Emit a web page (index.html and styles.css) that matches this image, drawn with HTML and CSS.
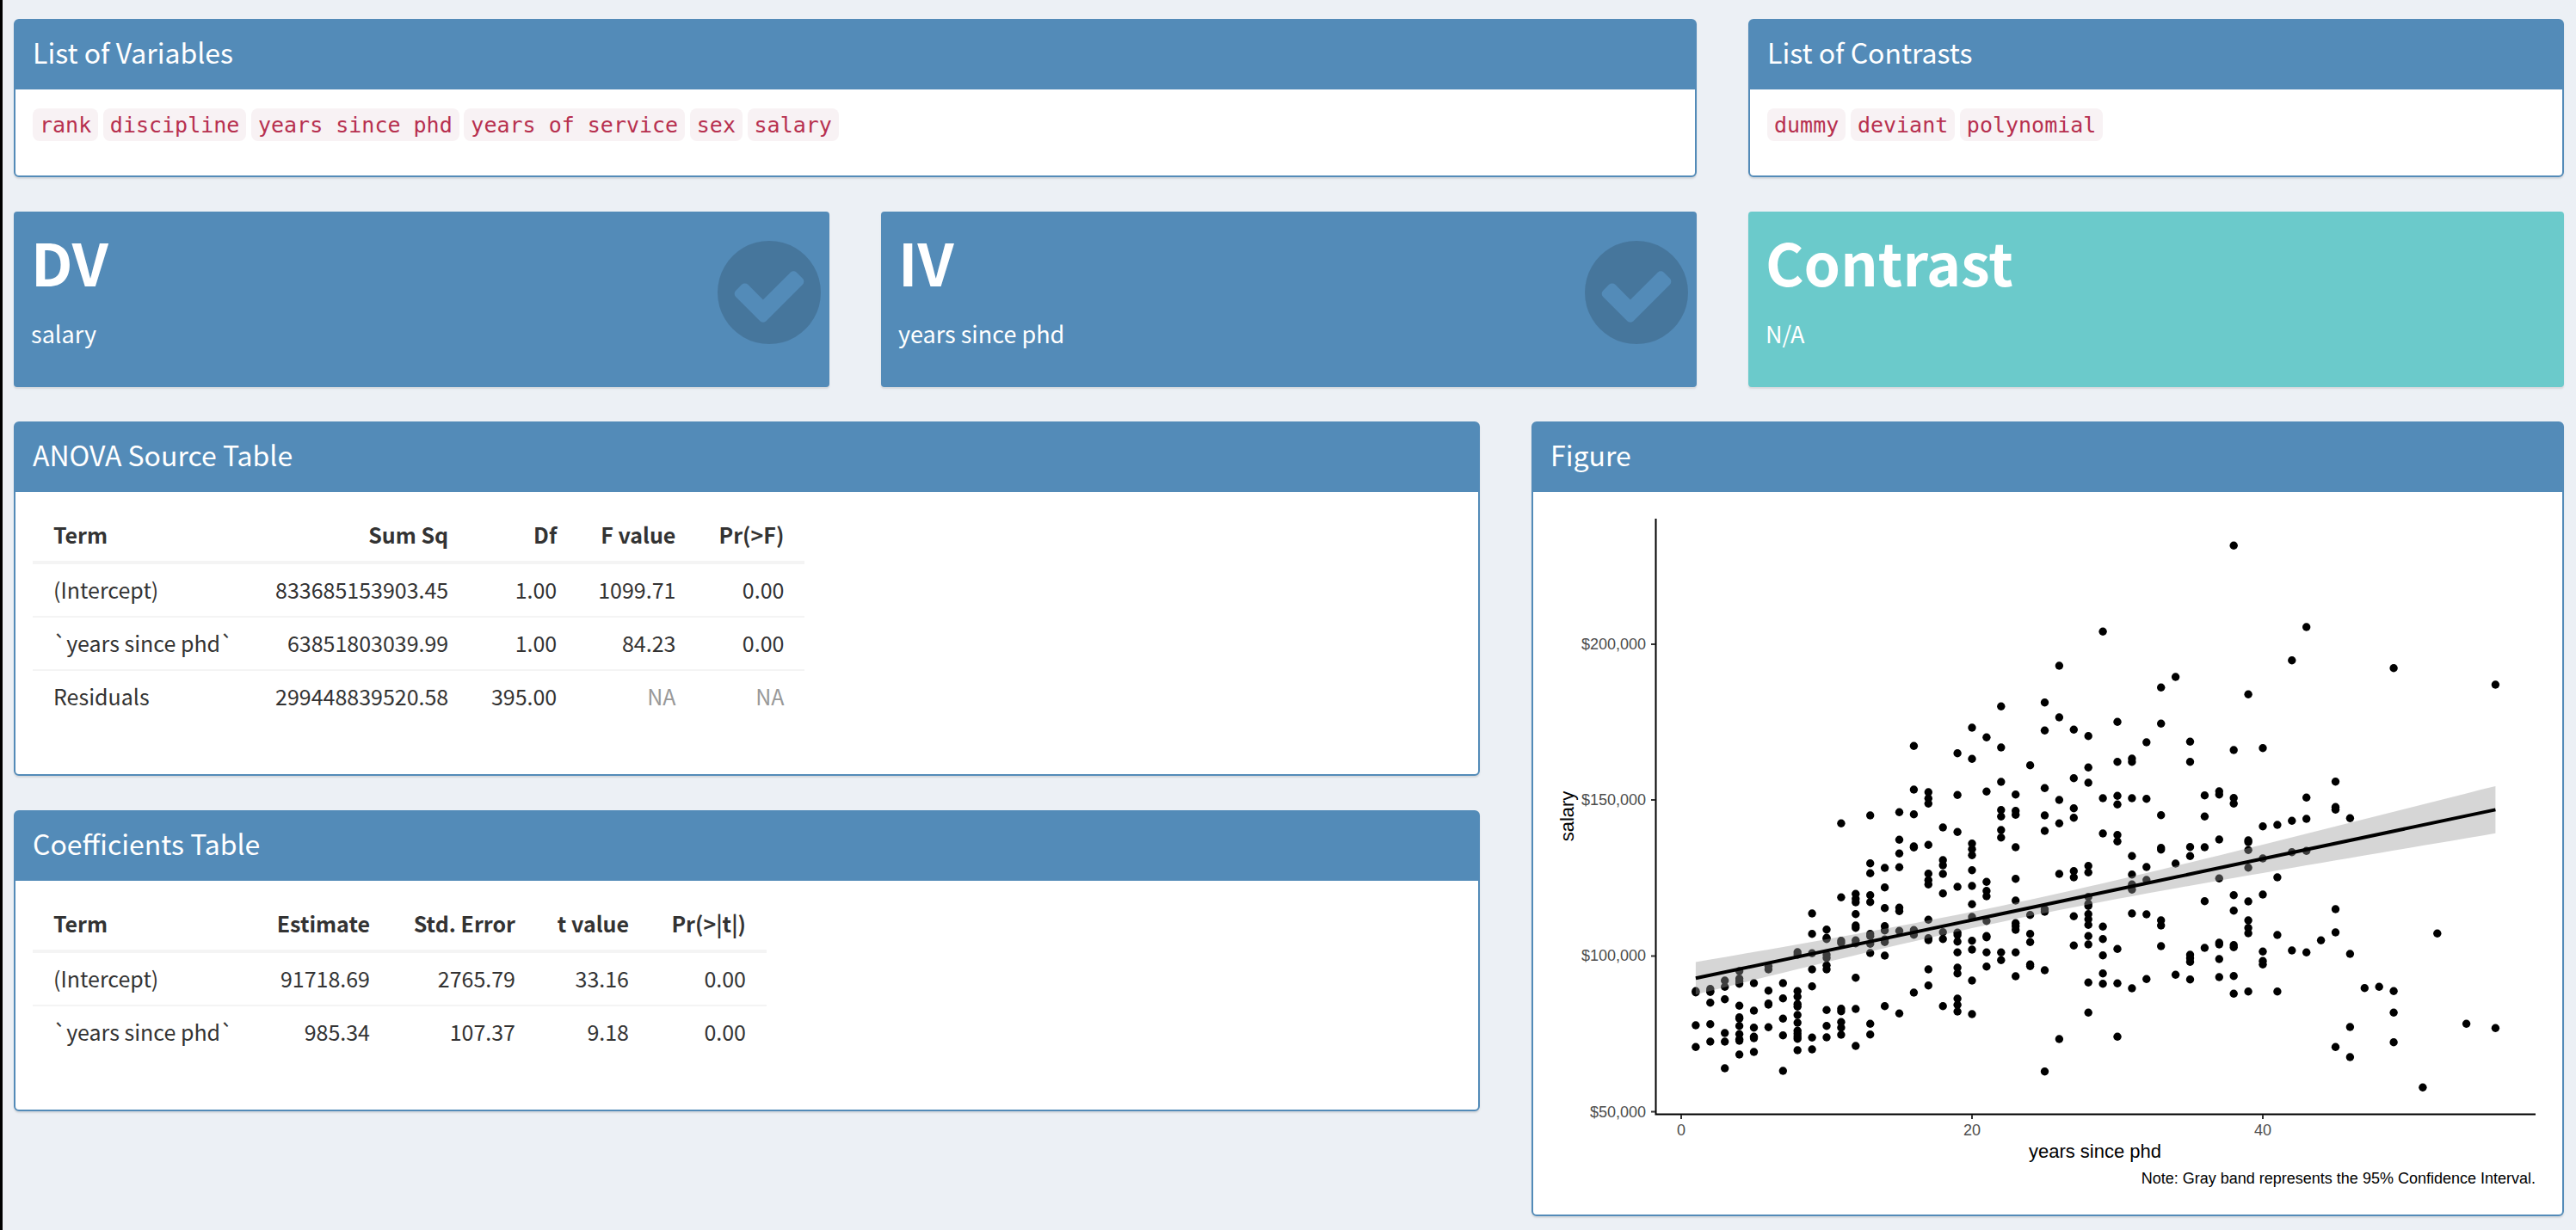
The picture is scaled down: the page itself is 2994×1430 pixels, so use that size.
FILE: index.html
```html
<!DOCTYPE html>
<html lang="en">
<head>
<meta charset="utf-8">
<title>ANOVA dashboard</title>
<meta name="viewport" content="width=device-width, initial-scale=1">
<link rel="stylesheet" href="styles.css">
</head>
<body>
<main class="dashboard">
  <section class="box span-8">
    <h2 class="box-title">List of Variables</h2>
    <div class="box-body">
      <p class="tags"><code>rank</code> <code>discipline</code> <code>years since phd</code> <code>years of service</code> <code>sex</code> <code>salary</code></p>
    </div>
  </section>
  <section class="box span-4">
    <h2 class="box-title">List of Contrasts</h2>
    <div class="box-body">
      <p class="tags"><code>dummy</code> <code>deviant</code> <code>polynomial</code></p>
    </div>
  </section>

  <section class="value-box span-4">
    <h3 class="value-name">DV</h3>
    <p class="value-text">salary</p>
    <svg class="value-icon" viewBox="128 128 1536 1536" aria-hidden="true"><path d="M1412 734q0-28-18-46l-91-90q-19-19-45-19t-45 19l-408 407-226-226q-19-19-45-19t-45 19l-91 90q-18 18-18 46 0 27 18 45l362 362q19 19 45 19 27 0 46-19l543-543q18-18 18-45zm252 162q0 209-103 385.5t-279.500 279.500-385.500 103-385.500-103-279.500-279.500-103-385.500 103-385.500 279.500-279.500 385.500-103 385.500 103 279.500 279.500 103 385.500z"/></svg>
  </section>
  <section class="value-box span-4">
    <h3 class="value-name">IV</h3>
    <p class="value-text">years since phd</p>
    <svg class="value-icon" viewBox="128 128 1536 1536" aria-hidden="true"><path d="M1412 734q0-28-18-46l-91-90q-19-19-45-19t-45 19l-408 407-226-226q-19-19-45-19t-45 19l-91 90q-18 18-18 46 0 27 18 45l362 362q19 19 45 19 27 0 46-19l543-543q18-18 18-45zm252 162q0 209-103 385.5t-279.500 279.500-385.500 103-385.500-103-279.500-279.500-103-385.500 103-385.500 279.500-279.500 385.500-103 385.500 103 279.500 279.500 103 385.500z"/></svg>
  </section>
  <section class="value-box value-box-teal span-4">
    <h3 class="value-name">Contrast</h3>
    <p class="value-text">N/A</p>
  </section>

  <div class="stack span-7">
    <section class="box">
      <h2 class="box-title">ANOVA Source Table</h2>
      <div class="box-body">
        <table class="stats">
          <colgroup><col class="col-term"><col class="col-sum"><col class="col-df"><col class="col-f"><col class="col-df"></colgroup>
          <thead>
            <tr><th scope="col">Term</th><th scope="col">Sum Sq</th><th scope="col">Df</th><th scope="col">F value</th><th scope="col">Pr(&gt;F)</th></tr>
          </thead>
          <tbody>
            <tr><td>(Intercept)</td><td>833685153903.45</td><td>1.00</td><td>1099.71</td><td>0.00</td></tr>
            <tr><td>`years since phd`</td><td>63851803039.99</td><td>1.00</td><td>84.23</td><td>0.00</td></tr>
            <tr><td>Residuals</td><td>299448839520.58</td><td>395.00</td><td class="na">NA</td><td class="na">NA</td></tr>
          </tbody>
        </table>
      </div>
    </section>
    <section class="box">
      <h2 class="box-title">Coefficients Table</h2>
      <div class="box-body">
        <table class="stats">
          <colgroup><col class="col-term"><col class="col-estimate"><col class="col-error"><col class="col-t"><col class="col-p"></colgroup>
          <thead>
            <tr><th scope="col">Term</th><th scope="col">Estimate</th><th scope="col">Std. Error</th><th scope="col">t value</th><th scope="col">Pr(&gt;|t|)</th></tr>
          </thead>
          <tbody>
            <tr><td>(Intercept)</td><td>91718.69</td><td>2765.79</td><td>33.16</td><td>0.00</td></tr>
            <tr><td>`years since phd`</td><td>985.34</td><td>107.37</td><td>9.18</td><td>0.00</td></tr>
          </tbody>
        </table>
      </div>
    </section>
  </div>

  <section class="box span-5">
    <h2 class="box-title">Figure</h2>
    <div class="box-body">
      <svg class="plot" viewBox="0 0 1156 800" role="img" aria-label="Salary by years since phd, with a fitted line">
        <g id="points" class="points"></g>
        <path id="band" class="band"/>
        <path id="fit" class="fit"/>
        <path class="axis" d="M122.500 11V703.500H1145"/>
        <path class="tick" d="M117 157h5M117 338h5M117 519.500h5M117 700.500h5M152 704v5M490 704v5M828 704v5"/>
        <g class="tick-label tick-label-y">
          <text x="111" y="163">$200,000</text>
          <text x="111" y="344">$150,000</text>
          <text x="111" y="525">$100,000</text>
          <text x="111" y="707">$50,000</text>
        </g>
        <g class="tick-label tick-label-x">
          <text x="152" y="728">0</text>
          <text x="490" y="728">20</text>
          <text x="828" y="728">40</text>
        </g>
        <text class="axis-title" x="633" y="754">years since phd</text>
        <text class="axis-title" transform="translate(27 357) rotate(-90)">salary</text>
        <text class="caption" x="1145" y="784">Note: Gray band represents the 95% Confidence Interval.</text>
      </svg>
    </div>
  </section>
</main>
<script src="plot.js"></script>
</body>
</html>
```
FILE: styles.css
```css
* {
  box-sizing: border-box;
}

body {
  margin: 0;
  min-height: 100vh;
  border-left: 3px solid #000;
  background: #ecf0f5;
  color: #333;
  font-family: "Noto Sans CJK SC", "Noto Sans", sans-serif;
  font-size: 25px;
}

h2,
h3,
p {
  margin: 0;
}

.dashboard {
  display: grid;
  grid-template-columns: repeat(12, minmax(0, 1fr));
  column-gap: 60px;
  row-gap: 40px;
  align-items: start;
  padding: 22px 14px 16px 13px;
}

.span-4 { grid-column: span 4; }
.span-5 { grid-column: span 5; }
.span-7 { grid-column: span 7; }
.span-8 { grid-column: span 8; }

.stack {
  display: flex;
  flex-direction: column;
  gap: 40px;
}

.box {
  border: 2px solid #538bb8;
  border-radius: 6px;
  background: #fff;
  box-shadow: 0 2px 2px rgba(0, 0, 0, 0.1);
}

.box-title {
  padding: 18px 20px 26px;
  background: #538bb8;
  color: #fff;
  font-size: 32px;
  font-weight: 400;
  line-height: 36px;
}

.box-body {
  padding: 20px;
}

.tags {
  margin-bottom: 22px;
  line-height: 38px;
}

code {
  padding: 5px 8px 4px;
  border-radius: 8px;
  background: #f8f2f4;
  color: #b7304f;
  font-family: "DejaVu Sans Mono", monospace;
  font-size: 25px;
  line-height: 1;
}

.value-box {
  position: relative;
  padding: 20px 20px 40px;
  border-radius: 4px;
  background: #538bb8;
  box-shadow: 0 2px 2px rgba(0, 0, 0, 0.1);
  color: #fff;
}

.value-box-teal {
  background: #6bcacb;
}

.value-name {
  margin-bottom: 24px;
  font-size: 68px;
  font-weight: 700;
  line-height: 76px;
}

.value-text {
  font-size: 27px;
  line-height: 44px;
}

.value-icon {
  position: absolute;
  top: 34px;
  right: 10px;
  width: 120px;
  height: 120px;
  fill: rgba(0, 0, 0, 0.15);
}

.stats {
  margin-bottom: 40px;
  border-spacing: 0;
  line-height: 28px;
}

.col-term { width: 258px; }
.col-sum { width: 249px; }
.col-df { width: 126px; }
.col-f { width: 138px; }
.col-estimate { width: 158px; }
.col-error { width: 169px; }
.col-t { width: 132px; }
.col-p { width: 136px; }

.stats th,
.stats td {
  padding: 15px 24px 17px;
  text-align: right;
  white-space: nowrap;
}

.stats th:first-child,
.stats td:first-child {
  text-align: left;
}

.stats th {
  border-bottom: 4px solid #f4f4f4;
  font-weight: 700;
}

.stats tr + tr td {
  border-top: 2px solid #f4f4f4;
}

.stats .na {
  color: #999;
}

.plot {
  display: block;
  width: 100%;
  font-family: "Liberation Sans", Arial, sans-serif;
}

.points { fill: #000; }
.band { fill: rgba(153, 153, 153, 0.4); }
.fit { fill: none; stroke: #000; stroke-width: 4px; }
.axis { fill: none; stroke: #000; stroke-width: 2px; }
.tick { stroke: #333; stroke-width: 2px; }
.tick-label { fill: #4d4d4d; font-size: 18px; }
.tick-label-y { text-anchor: end; }
.tick-label-x { text-anchor: middle; }
.axis-title { font-size: 22px; text-anchor: middle; }
.caption { font-size: 18px; text-anchor: end; }
```
FILE: plot.js
```js
// Years since phd -> heights of the observations, in thirds of a plot unit from the top.
const observations = {
  1: [1657, 1661, 1776, 1852],
  2: [1649, 1657, 1660, 1697, 1772, 1833],
  3: [1620, 1642, 1685, 1803, 1833, 1926],
  4: [1587, 1613, 1622, 1631, 1708, 1748, 1753, 1778, 1807, 1825, 1830, 1878],
  5: [1629, 1725, 1784, 1816, 1821, 1869],
  6: [1570, 1581, 1655, 1700, 1704, 1783],
  7: [1629, 1682, 1753, 1811, 1935],
  8: [1521, 1530, 1657, 1676, 1702, 1711, 1740, 1767, 1795, 1805, 1815, 1823, 1863],
  9: [1386, 1457, 1525, 1581, 1640, 1819, 1860],
  10: [1442, 1471, 1475, 1530, 1541, 1567, 1581, 1723, 1778, 1818],
  11: [1072, 1330, 1481, 1489, 1718, 1727, 1765, 1784, 1809],
  12: [1318, 1335, 1347, 1388, 1428, 1436, 1480, 1490, 1610, 1719, 1848],
  13: [1044, 1211, 1246, 1322, 1346, 1457, 1465, 1492, 1524, 1771, 1808],
  14: [1227, 1295, 1367, 1430, 1445, 1477, 1486, 1533, 1709],
  15: [1033, 1129, 1177, 1225, 1366, 1378, 1447, 1735],
  16: [802, 954, 1040, 1152, 1156, 1444, 1460, 1662],
  17: [963, 985, 1003, 1147, 1247, 1270, 1285, 1408, 1472, 1479, 1581, 1637],
  18: [1086, 1200, 1218, 1248, 1316, 1451, 1475, 1709],
  19: [827, 973, 1102, 1293, 1453, 1461, 1484, 1522, 1575, 1595, 1683, 1705, 1728],
  20: [738, 847, 1142, 1162, 1183, 1235, 1290, 1354, 1398, 1481, 1512, 1620, 1737],
  21: [772, 961, 1276, 1307, 1326, 1412, 1465, 1469, 1522, 1571],
  22: [664, 807, 927, 1025, 1048, 1095, 1121, 1522, 1549],
  23: [971, 1028, 1042, 1155, 1265, 1341, 1420, 1430, 1443, 1522, 1605],
  24: [869, 1391, 1457, 1486, 1564, 1570],
  25: [650, 748, 949, 1044, 1098, 1371, 1380, 1584, 1937],
  26: [522, 702, 990, 1072, 1248, 1824],
  27: [745, 914, 1019, 1052, 1238, 1260, 1396, 1498],
  28: [767, 877, 930, 1220, 1243, 1328, 1352, 1360, 1388, 1406, 1426, 1465, 1494, 1627, 1732],
  29: [403, 984, 1107, 1432, 1475, 1532, 1595, 1631],
  30: [718, 857, 976, 1006, 1112, 1135, 1510, 1630, 1816],
  31: [846, 857, 984, 1186, 1250, 1285, 1303, 1386, 1647],
  32: [789, 986, 1224, 1269, 1389, 1615],
  33: [598, 724, 1043, 1157, 1163, 1410, 1428, 1500],
  34: [561, 1212, 1600],
  35: [787, 857, 1154, 1186, 1530, 1542, 1555, 1616],
  36: [974, 1048, 1155, 1343, 1506],
  37: [960, 971, 1128, 1264, 1488, 1494, 1545, 1608],
  38: [103, 816, 983, 1003, 1322, 1376, 1496, 1504, 1604, 1666],
  39: [622, 1131, 1137, 1165, 1226, 1344, 1410, 1436, 1455, 1658],
  40: [809, 1082, 1194, 1320, 1519, 1552, 1564],
  41: [1077, 1260, 1461, 1658],
  42: [503, 1063, 1172, 1515],
  43: [387, 982, 1056, 1168, 1522],
  44: [1480],
  45: [926, 1015, 1024, 1371, 1452, 1852],
  46: [1054, 1527, 1782, 1887],
  47: [1646],
  48: [1642],
  49: [530, 1657, 1732, 1835],
  51: [1993],
  52: [1456],
  54: [1771],
  56: [588, 1786]
};

const px = (year) => (152 + 16.9 * year).toFixed(1);
const py = (height) => (8 + height / 3).toFixed(1);

const points = document.getElementById("points");
for (const [year, heights] of Object.entries(observations)) {
  for (const height of heights) {
    const dot = document.createElementNS("http://www.w3.org/2000/svg", "circle");
    dot.setAttribute("cx", px(Number(year)));
    dot.setAttribute("cy", py(height));
    dot.setAttribute("r", "4.7");
    points.append(dot);
  }
}

// Fitted line and its 95% confidence band.
const fitted = (year) => 1612 - 10.69 * (year - 1);
const margin = (year) => Math.sqrt(786 + 5.3 * (year - 22.3) ** 2);
const years = Array.from({ length: 56 }, (_, i) => i + 1);
const upper = years.map((y) => `${px(y)} ${py(fitted(y) - margin(y))}`);
const lower = years.map((y) => `${px(y)} ${py(fitted(y) + margin(y))}`).reverse();
document.getElementById("band").setAttribute("d", `M${upper.concat(lower).join("L")}Z`);
document.getElementById("fit").setAttribute("d", `M${px(1)} ${py(fitted(1))}L${px(56)} ${py(fitted(56))}`);
```
